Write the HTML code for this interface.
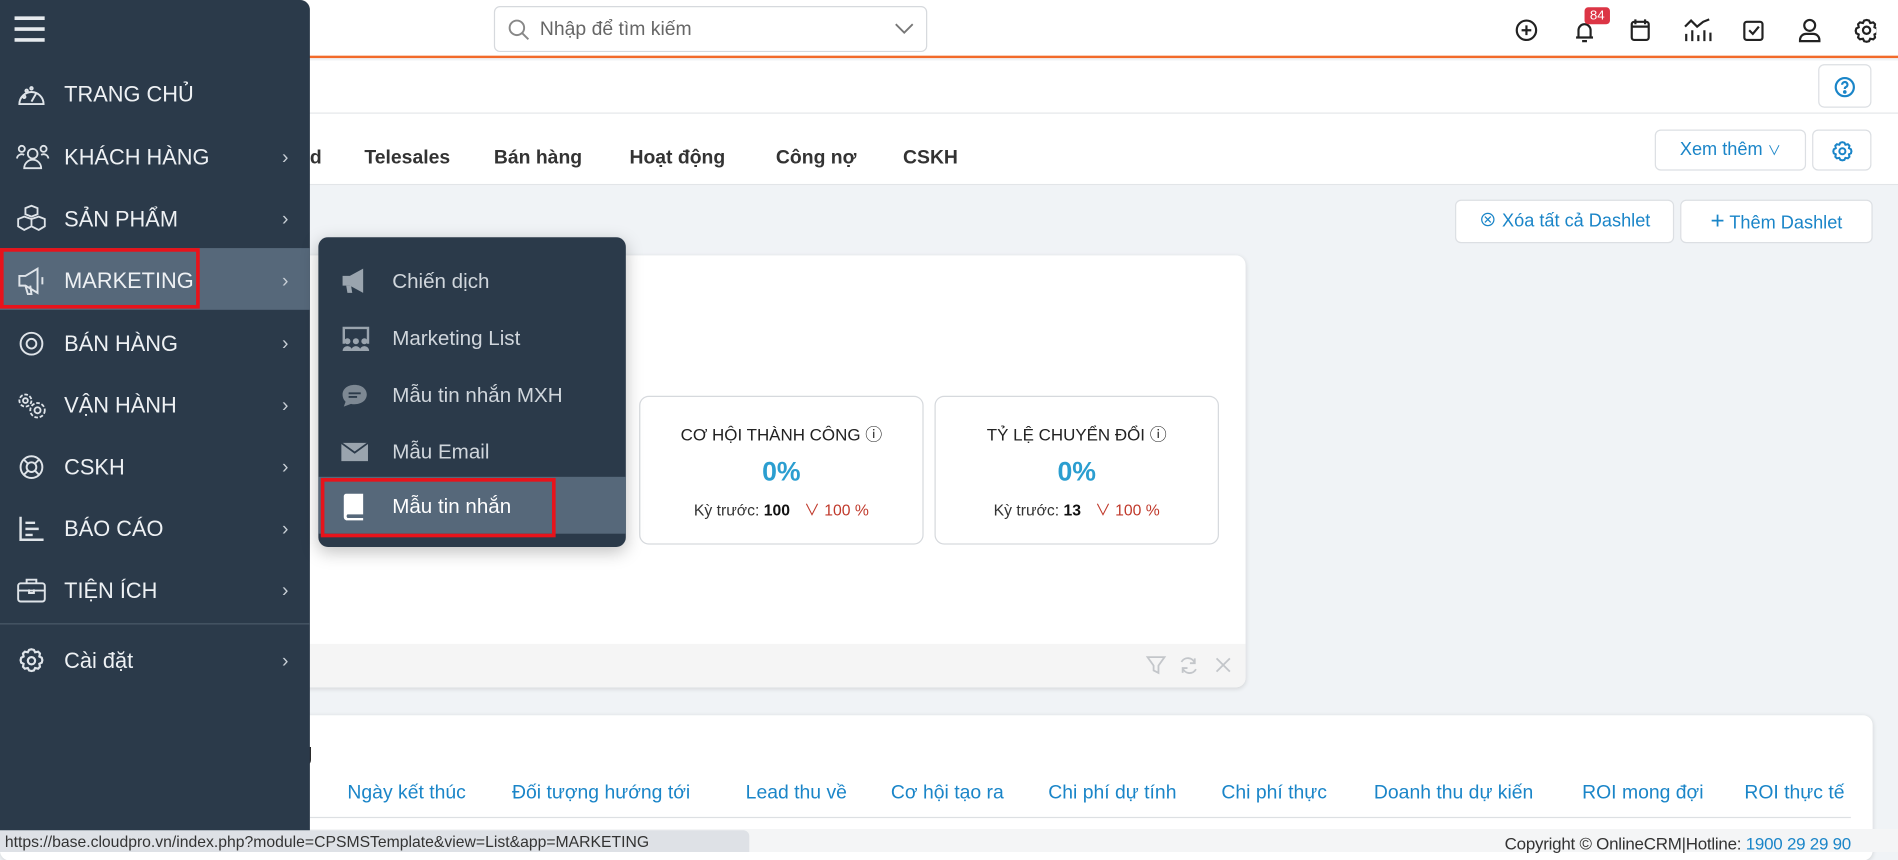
<!DOCTYPE html>
<html><head><meta charset="utf-8"><style>
*{box-sizing:border-box;margin:0;padding:0}
html,body{width:1898px;height:852px;overflow:hidden;background:#f0f3f6}
body{font-family:"Liberation Sans","Noto Sans CJK SC",sans-serif}
#w{position:absolute;left:0;top:0;width:1568px;height:704px;transform:scale(1.2105,1.2102);transform-origin:0 0;background:#f0f3f6}
.a{position:absolute}
.side{left:0;top:0;width:256px;height:704px;background:#2b3a4a;border-top-right-radius:8px}
.it{position:absolute;left:0;width:256px;height:51px;color:#eef1f4;font-size:18px;line-height:55px}
.it svg{position:absolute;left:13px;top:15px}
.it .t{position:absolute;left:53px}
.it .c{position:absolute;left:233px;top:0;font-size:16px;color:#c8cfd6}
.sub{left:263px;top:196px;width:254px;height:256px;background:#2b3a4a;border-radius:8px;box-shadow:0 4px 14px rgba(0,0,0,.25)}
.si{position:absolute;left:0;width:254px;height:47px;line-height:49px;color:#d0d6dc;font-size:17px}
.si .t{position:absolute;left:61px}
.si svg{position:absolute;left:18px;top:13px}
.tab{position:absolute;top:122px;font-size:16px;font-weight:bold;color:#333}
.btn{position:absolute;background:#fff;border:1px solid #dcdfe3;border-radius:5px;color:#1a85c8;font-size:15px;text-align:center}
.box{position:absolute;top:327px;width:235px;height:123px;border:1px solid #d6d9dd;border-radius:8px;background:#fff;text-align:center}
.box .h{margin-top:21px;font-size:14px;color:#222}
.box .v{margin-top:8px;font-size:22px;font-weight:bold;color:#2b9ed0}
.box .k{margin-top:8px;font-size:13px;color:#333}
.box .k b{color:#111}.box .k i{font-style:normal;color:#c0392b;margin-left:8px}
.th{position:absolute;top:647px;color:#1a85c8;font-size:16px}
</style></head><body><div id="w">
<div class="a" style="left:0;top:0;width:1568px;height:48px;background:#fff;border-bottom:2px solid #f26a2a"></div>
<div class="a" style="left:408px;top:5px;width:358px;height:38px;border:1px solid #d6d9dd;border-radius:5px;background:#fff">
<svg class="a" style="left:10px;top:9px" width="20" height="20" viewBox="0 0 20 20" fill="none" stroke="#888" stroke-width="1.6"><circle cx="8" cy="8" r="6"/><path d="M12.5 12.5l5 5"/></svg>
<span class="a" style="left:37px;top:10px;font-size:16px;color:#666">Nhập để tìm kiếm</span>
<svg class="a" style="left:330px;top:13px" width="16" height="10" viewBox="0 0 16 10" fill="none" stroke="#777" stroke-width="1.5"><path d="M1 1l7 7 7-7"/></svg></div>
<svg class="a" style="left:1250px;top:13px" width="300" height="24" viewBox="0 0 300 24" fill="none" stroke="#222" stroke-width="1.8">
<circle cx="11" cy="12" r="8"/><path d="M11 8v8M7 12h8"/>
<path d="M52 18h14M54 18v-6a5 5 0 0 1 10 0v6M57 21h4"/>
<rect x="98" y="5" width="14" height="15" rx="2"/><path d="M98 9h14M101 3v4M109 3v4"/>
<path d="M143 21v-6M148 21v-9M153 21v-5M158 21v-9M163 21v-7M142 9l5-5 5 5 5-4 5-2"/>
<rect x="191" y="5" width="15" height="15" rx="2"/><path d="M195 12l3 3 5-6"/>
<circle cx="245" cy="8" r="4.5"/><path d="M237 21v-1a5 5 0 0 1 5-5h6a5 5 0 0 1 5 5v1z"/>
<circle cx="292" cy="12" r="3"/><path d="M292 3.5l2 .5 1 2 2.5-.5 1.5 1.5-.5 2.5 2 1 .5 2-.5 2-2 1 .5 2.5-1.5 1.5-2.5-.5-1 2-2 .5-2-.5-1-2-2.5.5-1.5-1.5.5-2.5-2-1-.5-2 .5-2 2-1-.5-2.5 1.5-1.5 2.5.5 1-2z"/></svg>
<div class="a" style="left:1309px;top:6px;width:21px;height:14px;background:#dc3545;border-radius:3px;color:#fff;font-size:11px;text-align:center;line-height:14px">84</div>
<div class="a" style="left:0;top:50px;width:1568px;height:44px;background:#fff;border-bottom:1px solid #e2e5e8"></div>
<div class="btn" style="left:1502px;top:53px;width:44px;height:36px"><svg style="margin-top:9px" width="18" height="18" viewBox="0 0 18 18" fill="none" stroke="#1a85c8" stroke-width="1.8"><circle cx="9" cy="9" r="7.5"/><path d="M6.8 7a2.2 2.2 0 1 1 3 2c-.7.3-.8.8-.8 1.5"/><circle cx="9" cy="13" r=".6" fill="#1a85c8"/></svg></div>
<div class="a" style="left:0;top:94px;width:1568px;height:59px;background:#fff;border-bottom:1px solid #e2e5e8"></div>
<div class="tab" style="left:256px">d</div>
<div class="tab" style="left:301px">Telesales</div><div class="tab" style="left:408px">Bán hàng</div><div class="tab" style="left:520px">Hoạt động</div><div class="tab" style="left:641px">Công nợ</div><div class="tab" style="left:746px">CSKH</div>
<div class="btn" style="left:1367px;top:107px;width:125px;height:34px;line-height:32px">Xem thêm <span style="font-size:11px">&#8744;</span></div>
<div class="btn" style="left:1497px;top:107px;width:49px;height:34px"><svg style="margin-top:7px" width="20" height="20" viewBox="0 0 24 24" fill="none" stroke="#1a85c8" stroke-width="2"><circle cx="12" cy="12" r="3"/><path d="M12 3l2 .5 1 2 2.5-.5 1.5 1.5-.5 2.5 2 1 .5 2-.5 2-2 1 .5 2.5-1.5 1.5-2.5-.5-1 2-2 .5-2-.5-1-2-2.5.5-1.5-1.5.5-2.5-2-1-.5-2 .5-2 2-1-.5-2.5 1.5-1.5 2.5.5 1-2z"/></svg></div>
<div class="btn" style="left:1202px;top:165px;width:181px;height:36px;line-height:34px">&#8855; Xóa tất cả Dashlet</div>
<div class="btn" style="left:1388px;top:165px;width:159px;height:36px;line-height:34px"><span style="font-size:20px">+</span> Thêm Dashlet</div>
<div class="a" style="left:0;top:211px;width:1029px;height:357px;background:#fff;border-radius:8px;box-shadow:0 1px 4px rgba(0,0,0,.12);overflow:hidden">
<div class="a" style="left:0;top:321px;width:1029px;height:36px;background:#f5f5f5"></div>
<svg class="a" style="left:946px;top:330px" width="75" height="18" viewBox="0 0 75 18" fill="none" stroke="#c3c6ca" stroke-width="1.5"><path d="M2 2h14l-5 7v6l-4-2V9z"/><path d="M30 6a6 6 0 0 1 11 1M42 12a6 6 0 0 1-11-1M41 3v4h-4M31 15v-4h4"/><path d="M59 3l11 11M70 3L59 14"/></svg></div>
<div class="box" style="left:528px"><div class="h">CƠ HỘI THÀNH CÔNG ⓘ</div><div class="v">0%</div><div class="k">Kỳ trước: <b>100</b> <i>&#8744; 100 %</i></div></div>
<div class="box" style="left:772px"><div class="h">TỶ LỆ CHUYỂN ĐỔI ⓘ</div><div class="v">0%</div><div class="k">Kỳ trước: <b>13</b> <i>&#8744; 100 %</i></div></div>
<div class="a" style="left:0;top:591px;width:1547px;height:120px;background:#fff;border-radius:8px;box-shadow:0 1px 4px rgba(0,0,0,.12)"></div>
<div class="a" style="left:236px;top:611px;font-size:20px;color:#222">ng</div>
<div class="th" style="left:287px">Ngày kết thúc</div><div class="th" style="left:423px">Đối tượng hướng tới</div><div class="th" style="left:616px">Lead thu về</div><div class="th" style="left:736px">Cơ hội tạo ra</div><div class="th" style="left:866px">Chi phí dự tính</div><div class="th" style="left:1009px">Chi phí thực</div><div class="th" style="left:1135px">Doanh thu dự kiến</div><div class="th" style="left:1307px">ROI mong đợi</div><div class="th" style="left:1441px">ROI thực tế</div>
<div class="a" style="left:256px;top:675px;width:1273px;height:1px;background:#dde0e3"></div>
<div class="a" style="left:0;top:685px;width:1568px;height:19px;background:#f4f5f6"></div>
<div class="a" style="left:1243px;top:689px;font-size:14px;color:#333;letter-spacing:-.2px;white-space:nowrap">Copyright © OnlineCRM|Hotline: <span style="color:#1a85c8">1900 29 29 90</span></div>
<div class="a side">
<svg class="a" style="left:12px;top:13px" width="25" height="22" viewBox="0 0 25 22" stroke="#e6eaee" stroke-width="3"><path d="M0 2h25M0 11h25M0 20h25"/></svg>
<div class="it" style="top:51px"><svg width="26" height="24" viewBox="0 0 26 24" fill="none" stroke="#dfe4e9" stroke-width="1.6"><path d="M3 20a10 10 0 1 1 20 0z"/><path d="M13 18l4-7"/><circle cx="7" cy="14" r="1"/><circle cx="9" cy="9" r="1"/><circle cx="13" cy="7" r="1"/></svg><span class="t">TRANG CHỦ</span></div>
<div class="it" style="top:103px"><svg width="28" height="24" viewBox="0 0 28 24" fill="none" stroke="#dfe4e9" stroke-width="1.5"><circle cx="14" cy="9" r="4"/><path d="M7 21a7 7 0 0 1 14 0z"/><circle cx="5" cy="5" r="2.5"/><circle cx="23" cy="5" r="2.5"/><path d="M1 13a4 4 0 0 1 6-3M27 13a4 4 0 0 0-6-3"/></svg><span class="t">KHÁCH HÀNG</span><span class="c">&#8250;</span></div>
<div class="it" style="top:154px"><svg width="26" height="24" viewBox="0 0 26 24" fill="none" stroke="#dfe4e9" stroke-width="1.5"><path d="M8 3l5-2 5 2v5l-5 2-5-2zM2 12l5-2 6 2v6l-6 3-5-3zM13 12l6-2 5 2v6l-5 3-6-3z"/></svg><span class="t">SẢN PHẨM</span><span class="c">&#8250;</span></div>
<div class="it" style="top:205px;background:#56687a"><svg width="26" height="24" viewBox="0 0 26 24" fill="none" stroke="#dfe4e9" stroke-width="1.6"><path d="M3 8h5l10-6v20L8 16H3zM8 16l2 7h3l-1-7M22 9v6"/></svg><span class="t">MARKETING</span><span class="c">&#8250;</span></div>
<div class="a" style="left:0;top:205px;width:165px;height:50px;border:3px solid #e8131b"></div>
<div class="it" style="top:257px"><svg width="26" height="24" viewBox="0 0 26 24" fill="none" stroke="#dfe4e9" stroke-width="1.6"><circle cx="13" cy="12" r="9"/><circle cx="13" cy="12" r="4"/></svg><span class="t">BÁN HÀNG</span><span class="c">&#8250;</span></div>
<div class="it" style="top:308px"><svg width="28" height="24" viewBox="0 0 28 24" fill="none" stroke="#dfe4e9" stroke-width="1.5"><circle cx="8" cy="8" r="5" stroke-dasharray="3 1.5"/><circle cx="8" cy="8" r="2"/><circle cx="18" cy="16" r="6" stroke-dasharray="3 1.5"/><circle cx="18" cy="16" r="2.5"/></svg><span class="t">VẬN HÀNH</span><span class="c">&#8250;</span></div>
<div class="it" style="top:359px"><svg width="26" height="24" viewBox="0 0 26 24" fill="none" stroke="#dfe4e9" stroke-width="1.6"><circle cx="13" cy="12" r="9"/><circle cx="13" cy="12" r="4"/><path d="M6.5 5.5l3.7 3.7M19.5 5.5l-3.7 3.7M6.5 18.5l3.7-3.7M19.5 18.5l-3.7-3.7"/></svg><span class="t">CSKH</span><span class="c">&#8250;</span></div>
<div class="it" style="top:410px"><svg width="26" height="24" viewBox="0 0 26 24" fill="none" stroke="#dfe4e9" stroke-width="2"><path d="M4 2v19h19M8 7h8M8 12h11M8 17h6"/></svg><span class="t">BÁO CÁO</span><span class="c">&#8250;</span></div>
<div class="it" style="top:461px"><svg width="26" height="24" viewBox="0 0 26 24" fill="none" stroke="#dfe4e9" stroke-width="1.6"><rect x="2" y="6" width="22" height="15" rx="2"/><path d="M9 6V3h8v3M2 12h22M11 11v3h4v-3"/></svg><span class="t">TIỆN ÍCH</span><span class="c">&#8250;</span></div>
<div class="a" style="left:0;top:515px;width:256px;height:1px;background:#4b5a69"></div>
<div class="it" style="top:519px"><svg width="26" height="24" viewBox="0 0 24 24" fill="none" stroke="#dfe4e9" stroke-width="1.8"><circle cx="12" cy="12" r="3"/><path d="M12 2.5l2 .5 1 2 2.5-.5 1.5 1.5-.5 2.5 2 1 .5 2-.5 2-2 1 .5 2.5-1.5 1.5-2.5-.5-1 2-2 .5-2-.5-1-2-2.5.5-1.5-1.5.5-2.5-2-1-.5-2 .5-2 2-1-.5-2.5 1.5-1.5 2.5.5 1-2z"/></svg><span class="t">Cài đặt</span><span class="c">&#8250;</span></div>
</div>
<div class="a sub">
<div class="si" style="top:12px"><svg width="24" height="22" viewBox="0 0 24 22" fill="#9aa4ae"><path d="M2 7h6l11-6v20L8 15H2z"/><path d="M5 15h4l1 6H6z"/></svg><span class="t">Chiến dịch</span></div>
<div class="si" style="top:59px"><svg width="26" height="24" viewBox="0 0 26 24" fill="#9aa4ae"><path d="M2 2h22v14h-2V4H4v12H2z"/><circle cx="6" cy="14" r="2.5"/><circle cx="13" cy="14" r="2.5"/><circle cx="20" cy="14" r="2.5"/><path d="M2 22a4 4 0 0 1 8 0zM9 22a4 4 0 0 1 8 0zM16 22a4 4 0 0 1 8 0z"/></svg><span class="t">Marketing List</span></div>
<div class="si" style="top:106px"><svg width="24" height="24" viewBox="0 0 24 24" fill="#7d8893"><path d="M12 3c6 0 10 3.5 10 8s-4 8-10 8c-1 0-2 0-3-.3L3 21l1.5-4C3 15.5 2 13.5 2 11c0-4.5 4-8 10-8z"/><path d="M7 10h10M7 13h7" stroke="#2b3a4a" stroke-width="1.6"/></svg><span class="t">Mẫu tin nhắn MXH</span></div>
<div class="si" style="top:153px"><svg width="24" height="22" viewBox="0 0 24 22" fill="#9aa4ae"><path d="M1 4h22v15H1z"/><path d="M1 4l11 8 11-8" stroke="#2b3a4a" stroke-width="1.5" fill="none"/></svg><span class="t">Mẫu Email</span></div>
<div class="si" style="top:198px;background:#56687a;color:#fff"><svg width="22" height="24" viewBox="0 0 22 24" fill="#fff"><path d="M3 3a2 2 0 0 1 2-2h14v17H6a2 2 0 0 0 0 3h13v2H5a3 3 0 0 1-2-3z"/></svg><span class="t">Mẫu tin nhắn</span></div>
<div class="a" style="left:2px;top:199px;width:194px;height:49px;border:3px solid #e8131b"></div>
</div>
<div class="a" style="left:0;top:686px;width:619px;height:18px;background:#dee1e6;border-top-right-radius:5px;font-size:13px;color:#333;padding-left:4px;line-height:20px;overflow:hidden;white-space:nowrap">https://base.cloudpro.vn/index.php?module=CPSMSTemplate&amp;view=List&amp;app=MARKETING</div>
</div></body></html>
